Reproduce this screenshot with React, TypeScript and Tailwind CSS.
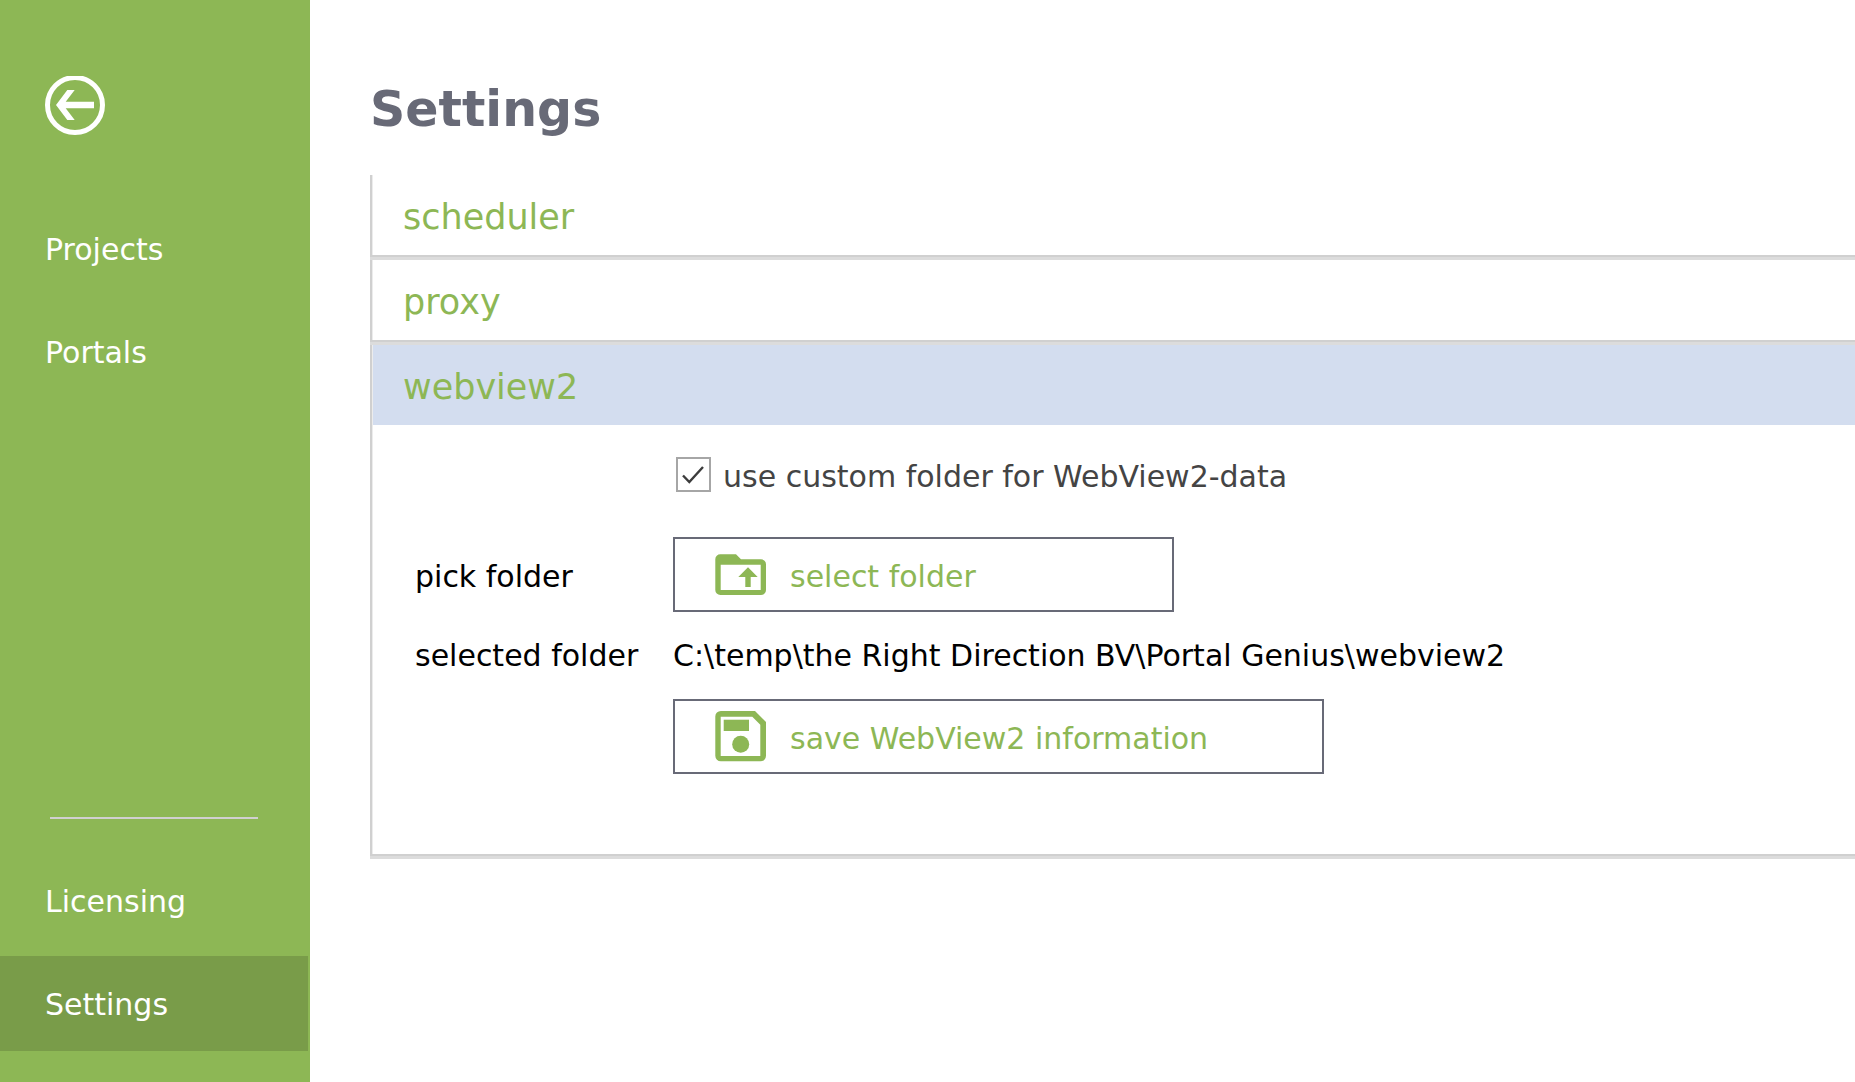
import { useState } from 'react';
import type { ReactNode } from 'react';

interface NavItemProps {
  label: string;
  active?: boolean;
}

function NavItem({ label, active = false }: NavItemProps) {
  return (
    <a
      href="#"
      aria-current={active ? 'page' : undefined}
      className={`mr-[2px] flex h-[95px] items-center pl-[45px] pt-[2px] text-white ${active ? 'bg-[#799c49]' : ''}`}
    >
      {label}
    </a>
  );
}

function BackIcon() {
  return (
    <svg width="60" height="59" viewBox="0 1 60 59" aria-hidden="true">
      <circle cx="30" cy="30" r="27.5" fill="none" stroke="white" strokeWidth="5" />
      <path d="M11 30 22.3 15H29.7L20.7 26.7H49V33.3H20.7L29.7 45H22.3Z" fill="white" />
    </svg>
  );
}

function FolderUploadIcon() {
  return (
    <svg width="51" height="51" viewBox="0 0 51 51" fill="#8db755" aria-hidden="true">
      <path
        fillRule="evenodd"
        d="M5.3 5.3H21L26 10.3H46A5 5 0 0 1 51 15.3V41A5 5 0 0 1 46 46H5.3A5 5 0 0 1 .3 41V10.3A5 5 0 0 1 5.3 5.3ZM5.7 15.7V41H45.7V15.7Z"
      />
      <path d="M33 18.3 42.7 28H35.7V38H30.3V28H23.3Z" />
    </svg>
  );
}

function SaveIcon() {
  return (
    <svg width="51" height="51" viewBox="0 0 51 51" fill="#8db755" aria-hidden="true">
      <path
        fillRule="evenodd"
        d="M5.8 0H40L51 11V44.8A5.5 5.5 0 0 1 45.5 50.3H5.8A5.5 5.5 0 0 1 .3 44.8V5.5A5.5 5.5 0 0 1 5.8 0ZM5.7 5.7V45H45.3V13.7L37.3 5.7Z"
      />
      <path d="M8.7 8.7H34V20H8.7Z" />
      <circle cx="25.7" cy="33.3" r="8.5" />
    </svg>
  );
}

function SectionHeader({ title, open = false }: { title: string; open?: boolean }) {
  return (
    <button
      type="button"
      aria-expanded={open}
      className={`block w-full pt-[22px] pb-[18px] pl-[30px] text-left text-[35px] leading-[40px] text-[#8db755] ${open ? 'bg-[#d3ddef]' : ''}`}
    >
      {title}
    </button>
  );
}

function Divider() {
  return <div className="-ml-[3px] h-[5px] border-t-2 border-[#d0d0d0] bg-[#dcdcdc]" />;
}

function Row({ label, children }: { label?: string; children: ReactNode }) {
  return (
    <div className="flex items-center">
      <div className="w-[258px] shrink-0">{label && <div className="pt-1">{label}</div>}</div>
      {children}
    </div>
  );
}

function ActionButton({ icon, width, children }: { icon: ReactNode; width: string; children: ReactNode }) {
  return (
    <button
      type="button"
      className={`flex h-[75px] items-center gap-6 border-2 border-[#686a77] bg-white pl-10 text-[#8db755] ${width}`}
    >
      {icon}
      <span className="pt-1">{children}</span>
    </button>
  );
}

export default function App() {
  const [customFolder, setCustomFolder] = useState(true);

  return (
    <div className="flex min-h-screen bg-white font-['DejaVu_Sans',sans-serif] text-[30px] leading-[40px] text-black">
      <aside className="flex w-[310px] shrink-0 flex-col bg-[#8db755] pt-[76px] pb-[31px]">
        <button type="button" aria-label="Back" className="ml-[45px] w-[60px]">
          <BackIcon />
        </button>
        <nav className="mt-[66px] flex flex-1 flex-col gap-2">
          <NavItem label="Projects" />
          <NavItem label="Portals" />
          <div className="mt-auto mb-[26px] ml-[50px] h-[2px] w-[208px] bg-[#d0d0d0]" />
          <NavItem label="Licensing" />
          <NavItem label="Settings" active />
        </nav>
      </aside>

      <main className="min-w-0 flex-1 overflow-hidden pt-20 pl-[60px]">
        <h1 className="text-[49px] leading-[60px] font-bold text-[#686a77]">Settings</h1>

        <div className="mt-[35px] border-l-2 border-[#d0d0d0]">
          <div className="border-l border-[#ececec]">
            <SectionHeader title="scheduler" />
            <Divider />
            <SectionHeader title="proxy" />
            <Divider />
            <SectionHeader title="webview2" open />

            <div className="pt-8 pb-20 pl-[42px]">
              <Row>
                <label className="flex gap-3 pl-[3px] text-[#444444]">
                  <span className="grid size-[35px]">
                    <input
                      type="checkbox"
                      checked={customFolder}
                      onChange={(e) => setCustomFolder(e.target.checked)}
                      className="col-start-1 row-start-1 size-[35px] appearance-none border-2 border-[#a6a6a6] bg-white"
                    />
                    {customFolder && (
                      <svg viewBox="0 0 35 35" className="pointer-events-none col-start-1 row-start-1 size-[35px]">
                        <path d="M7 18.5 13.3 25 27 10" fill="none" stroke="#3c3c3c" strokeWidth="2.4" />
                      </svg>
                    )}
                  </span>
                  use custom folder for WebView2-data
                </label>
              </Row>
              <div className="mt-10">
                <Row label="pick folder">
                  <ActionButton icon={<FolderUploadIcon />} width="w-[501px]">
                    select folder
                  </ActionButton>
                </Row>
              </div>
              <div className="mt-5 mb-[23px]">
                <Row label="selected folder">
                  <span className="pt-1">C:\temp\the Right Direction BV\Portal Genius\webview2</span>
                </Row>
              </div>
              <Row>
                <ActionButton icon={<SaveIcon />} width="w-[651px]">
                  save WebView2 information
                </ActionButton>
              </Row>
            </div>
            <Divider />
          </div>
        </div>
      </main>
    </div>
  );
}
